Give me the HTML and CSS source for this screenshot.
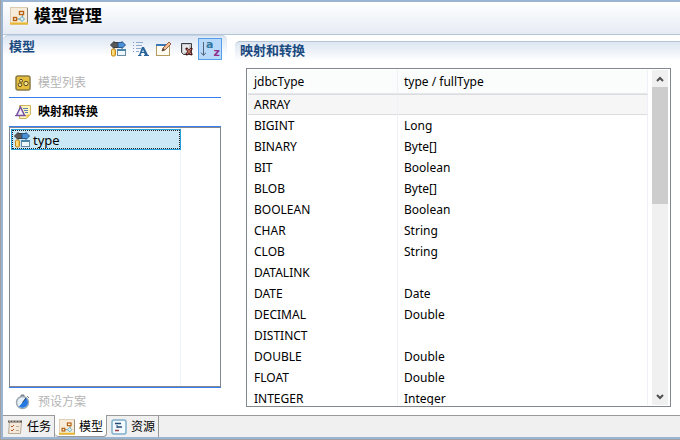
FILE: index.html
```html
<!DOCTYPE html>
<html lang="zh-CN">
<head>
<meta charset="utf-8">
<title>模型管理</title>
<link rel="stylesheet" href="styles.css">
</head>
<body>
<svg class="defs" aria-hidden="true">
  <symbol id="i-model" viewBox="0 0 18 18">
    <rect x="0.5" y="0.5" width="17" height="17" fill="#f7ecd9" stroke="#ddcbb0"/>
    <path d="M17.5 1v16" stroke="#8d8478"/>
    <path d="M0 16.5h18" stroke="#e8b92e" stroke-width="2"/>
    <path d="M7 12h3M12.500 8v2" stroke="#7d8b92"/>
    <rect x="3.500" y="10.500" width="3" height="3" fill="#fff" stroke="#b8620f" stroke-width="1.400"/>
    <rect x="9.500" y="4.500" width="4" height="3" fill="#fff" stroke="#b8620f" stroke-width="1.400"/>
    <path d="M12 9.500l2.500 2.500-2.500 2.500L9.500 12z" fill="#d7f0f5" stroke="#5aa5b8"/>
  </symbol>
  <symbol id="i-type" viewBox="0 0 16 16">
    <path d="M0.500 4L4 0.500v1h4v5H4v1z" fill="#5a5a5a" stroke="#3c3c3c"/>
    <path d="M15.500 4L12 0.500v1H8v5h4v1z" fill="#4b8fd6" stroke="#28598c"/>
    <path d="M1.500 9c0-1.500 4-1.500 4 0v5c0 1.500-4 1.500-4 0z" fill="#f5c64c" stroke="#c4891c"/>
    <path d="M3 9v5" stroke="#fff2b8"/>
    <rect x="7.500" y="8.500" width="8" height="6" fill="#eef7fb" stroke="#688ba0"/>
    <path d="M7 9h9" stroke="#4e86a8" stroke-width="2"/>
  </symbol>
  <symbol id="i-text" viewBox="0 0 16 16">
    <path d="M3 1.500h7M3 4.500h6M3 7.500h5M3 10.500h3" stroke="#93a9cc"/>
    <path d="M0 1.500h1M0 4.500h1M0 7.500h1M0 10.500h1" stroke="#7c98c8"/>
    <path d="M9 6h2l4 8h1v1h-5v-1h1l-1-2H8.500l-1 2h1v1H5v-1h1z" fill="#28649a"/>
    <path d="M9 11h2L10 8.500z" fill="#d8e8f4"/>
  </symbol>
  <symbol id="i-edit" viewBox="0 0 16 16">
    <rect x="0.500" y="3.500" width="13" height="11" fill="#fffdf2" stroke="#b49a5b"/>
    <path d="M0 4h10" stroke="#3978b7" stroke-width="2"/>
    <path d="M6 10l1-3 6-6 2 2-6 6z" fill="#f0bf96" stroke="#9b6245"/>
    <path d="M6 10l1-3 2 2z" fill="#444"/>
  </symbol>
  <symbol id="i-delete" viewBox="0 0 16 16">
    <path d="M2.500 2.500h10v11h-8l-2-2z" fill="#c8cdd0" stroke="#3e3e42"/>
    <path d="M4 4l6 0v5l-6 3z" fill="#e5e7e8"/>
    <path d="M7 7l6 7M13 7l-6 7" stroke="#4a1714" stroke-width="2.500"/>
    <path d="M8 8l4 5M12 8l-4 5" stroke="#e58a7a"/>
  </symbol>
  <symbol id="i-list" viewBox="0 0 16 16">
    <rect x="1" y="1" width="14" height="14" rx="2" fill="#e5bd3d" stroke="#8b7a43" stroke-width="1.500"/>
    <g fill="#f6e38f" stroke="#5b4b1e"><circle cx="6" cy="5.800" r="1.500"/><circle cx="5" cy="9.800" r="1.800"/><circle cx="11" cy="8.500" r="2.200"/></g>
  </symbol>
  <symbol id="i-map" viewBox="0 0 16 16">
    <path d="M4.500 1.500h11v9l-4 4h-7z" fill="#fff5bd" stroke="#cfb45e"/>
    <path d="M11.500 14.500v-4h4z" fill="#efc553"/>
    <path d="M8 4.500h5M9 6.500h4M10 8.500h3" stroke="#5d82b8"/>
    <path d="M1.500 11.500L5.500 3l4 8.500z" fill="#f5effb" stroke="#7650a1" stroke-width="1.500"/>
    <path d="M0 11.500h11" stroke="#7650a1"/>
  </symbol>
  <symbol id="i-clock" viewBox="0 0 16 16">
    <path d="M6 1h3v2H6zM12 2l2 2" fill="#7a8289" stroke="#7a8289"/>
    <circle cx="7.500" cy="8.500" r="6" fill="#e5f0fa" stroke="#9ca7b0" stroke-width="1.500"/>
    <path d="M7.500 8.500L11 4a5.200 5.200 0 0 1-7 8.500z" fill="#2478e2"/>
    <path d="M7.500 8.500L11 4" stroke="#263b52"/>
  </symbol>
  <symbol id="i-task" viewBox="0 0 16 16">
    <path d="M2.500 2.500h12l-1 12h-12z" fill="#f4e9d8" stroke="#b7aa98"/>
    <path d="M1 1.500h14v2H1z" fill="#5d5650"/>
    <path d="M3 1v2M6 1v2M9 1v2M12 1v2" stroke="#ddd5c8"/>
    <path d="M4 7l1 1 2-2M4 11l1 1 2-2" fill="none" stroke="#b5532d"/>
    <path d="M9 7.500h3M9 11.500h3" stroke="#b9b0a2"/>
  </symbol>
  <symbol id="i-resource" viewBox="0 0 16 16">
    <rect x="1" y="1" width="14" height="14" rx="2" fill="#f2faff" stroke="#7eaecb" stroke-width="1.500"/>
    <path d="M4 4.500h6M6 8h5" stroke="#244b79" stroke-width="1.500"/>
    <path d="M6 6v3" stroke="#244b79"/>
    <path d="M4 11.500h4" stroke="#9c3f3a" stroke-width="1.500"/>
  </symbol>
  <symbol id="i-arrow" viewBox="0 0 6 16"><path d="M3.500 1v13M1 11.500L3.500 14.500l2.500-3" fill="none" stroke="#536579"/></symbol>
</svg>
<div class="app">
  <header class="title">
    <svg class="icon-title"><use href="#i-model"/></svg>
    <h1>模型管理</h1>
  </header>
  <main class="body">
    <aside class="side">
      <div class="side-head">
        <h2>模型</h2>
        <div class="tools">
          <button type="button" aria-label="类型"><svg><use href="#i-type"/></svg></button>
          <button type="button" aria-label="文本"><svg><use href="#i-text"/></svg></button>
          <button type="button" aria-label="编辑"><svg><use href="#i-edit"/></svg></button>
          <button type="button" aria-label="删除"><svg><use href="#i-delete"/></svg></button>
          <button type="button" class="on" aria-label="排序"><svg class="arrow"><use href="#i-arrow"/></svg><span class="az"><b>a</b><b>z</b></span></button>
        </div>
      </div>
      <button type="button" class="fold muted first"><svg><use href="#i-list"/></svg>模型列表</button>
      <button type="button" class="fold current"><svg><use href="#i-map"/></svg>映射和转换</button>
      <div class="list">
        <div class="list-col"><button type="button" class="item"><svg><use href="#i-type"/></svg>type</button></div>
      </div>
      <button type="button" class="fold muted last"><svg><use href="#i-clock"/></svg>预设方案</button>
    </aside>
    <section class="detail">
      <h2 class="detail-head">映射和转换</h2>
      <div class="grid-box">
        <div class="grid-view">
          <table>
            <thead><tr><th>jdbcType</th><th>type / fullType</th></tr></thead>
            <tbody>
              <tr class="hot"><td>ARRAY</td><td></td></tr>
              <tr><td>BIGINT</td><td>Long</td></tr>
              <tr><td>BINARY</td><td>Byte[]</td></tr>
              <tr><td>BIT</td><td>Boolean</td></tr>
              <tr><td>BLOB</td><td>Byte[]</td></tr>
              <tr><td>BOOLEAN</td><td>Boolean</td></tr>
              <tr><td>CHAR</td><td>String</td></tr>
              <tr><td>CLOB</td><td>String</td></tr>
              <tr><td>DATALINK</td><td></td></tr>
              <tr><td>DATE</td><td>Date</td></tr>
              <tr><td>DECIMAL</td><td>Double</td></tr>
              <tr><td>DISTINCT</td><td></td></tr>
              <tr><td>DOUBLE</td><td>Double</td></tr>
              <tr><td>FLOAT</td><td>Double</td></tr>
              <tr><td>INTEGER</td><td>Integer</td></tr>
            </tbody>
          </table>
        </div>
        <div class="scroll">
          <button type="button" aria-label="向上"><svg viewBox="0 0 8 6"><path d="M1 5l3-3 3 3" /></svg></button>
          <div class="track"><div class="thumb"></div></div>
          <button type="button" aria-label="向下"><svg viewBox="0 0 8 6"><path d="M1 1l3 3 3-3" /></svg></button>
        </div>
      </div>
    </section>
  </main>
  <nav class="tabs">
    <button type="button"><svg><use href="#i-task"/></svg>任务</button>
    <button type="button" class="active"><svg><use href="#i-model"/></svg>模型</button>
    <button type="button"><svg><use href="#i-resource"/></svg>资源</button>
  </nav>
</div>
</body>
</html>
```
FILE: styles.css
```css
* { box-sizing: border-box; }
html, body { height: 100%; margin: 0; }
body {
  font: 12px/20px "Noto Sans", "Noto Sans CJK SC", sans-serif;
  color: #000;
  background: #fff;
  border: solid #a0a0a0;
  border-width: 0 0 1px 1px;
}
button { font: inherit; color: inherit; background: none; border: 0; padding: 0; margin: 0; }
h1, h2 { margin: 0; }
svg { flex: none; width: 16px; height: 16px; display: block; }
.defs { position: absolute; width: 0; height: 0; }

.app {
  height: 100%;
  display: flex;
  flex-direction: column;
  border: 2px solid #9ab4d1;
  border-right: 0;
}
.title {
  height: 33px;
  flex: none;
  display: flex;
  align-items: center;
  gap: 6px;
  padding: 0 7px 4px;
  background: linear-gradient(#fff, #e6ebf4);
  border-bottom: 1px solid #b4c5d8;
}
.title h1 { font-size: 17px; line-height: 24px; font-weight: 700; }
.icon-title { width: 18px; height: 18px; }

.body { flex: 1; min-height: 0; display: flex; gap: 8px; }
.side { width: 224px; flex: none; display: flex; flex-direction: column; padding-bottom: 2px; }
.side-head {
  height: 30px;
  display: flex;
  justify-content: space-between;
  padding: 2px 5px 0 6px;
  background: linear-gradient(#dce6f3, #fff 20px);
  border-top: 1px solid #c5d5e6;
  border-radius: 5px 5px 0 0;
}
h2 { color: #1a4a80; font-size: 13px; line-height: 18px; font-weight: 700; }
.side-head h2 { line-height: 16px; }
.tools { display: flex; }
.tools button { width: 23px; height: 22px; display: flex; align-items: center; justify-content: center; }
.tools .on { width: 24px; background: #b9d9fb; border: 1px solid #559fe8; }
.tools .arrow { width: 6px; }
.az { display: flex; font: 11px/11px "DejaVu Sans", sans-serif; height: 20px; }
.az b:first-child { color: #32779b; }
.az b:last-child { color: #8e2f8e; padding-top: 8px; }

.fold {
  flex: none;
  height: 29px;
  margin: 0 6px;
  padding: 0 6px;
  display: flex;
  align-items: center;
  gap: 7px;
  border-bottom: 1px solid #3a7ff0;
}
.muted { color: #b4b4b4; }
.first { height: 33px; padding-top: 3px; }
.current { font-weight: 700; border-bottom: 1px solid #3a7ff0; }
.last { border: 0; height: 26px; padding-top: 4px; }
.list {
  flex: 1;
  min-height: 0;
  margin: 0 6px;
  padding: 0 1px;
  border: 1px solid #828790;
  box-shadow: 0 1px #3a7ff0;
}
.list-col { width: 170px; height: 100%; border-right: 1px solid #ecf3fa; padding-top: 1px; }
.item {
  width: 170px;
  height: 21px;
  display: flex;
  align-items: center;
  gap: 3px;
  padding-left: 2px;
  background: #cbe8f6;
  border: 1px solid #26a0da;
  outline: 1px dotted #222;
  outline-offset: -2px;
  font-size: 13px;
}

.detail { flex: 1; min-width: 0; display: flex; flex-direction: column; padding: 6px 0 8px; }
.detail-head {
  height: 20px;
  flex: none;
  padding-left: 5px;
  line-height: 16px;
  background: linear-gradient(#dce5f1, #fff);
  border-top: 1px solid #b4c5d8;
  border-radius: 5px 0 0 0;
}
.grid-box {
  flex: 1;
  min-height: 0;
  margin: 7px 9px 0 11px;
  padding: 1px;
  display: flex;
  border: 1px solid #828790;
}
.grid-view { flex: 1; min-width: 0; overflow: hidden; padding-right: 4px; }
table { width: 100%; table-layout: fixed; border-collapse: separate; border-spacing: 0; }
th, td { height: 21px; padding: 0 6px; text-align: left; font-weight: 400; line-height: 20px; border-right: 1px solid #eef1f5; }
th { height: 24px; background: #fbfdfd; border-bottom: 1px solid #e4e8ee; }
th:first-child { width: 150px; }
.hot td { background: #f6f6f6; border-bottom: 1px solid #dcdcdc; border-top: 1px solid #dcdcdc; line-height: 18px; }
.scroll { width: 16px; flex: none; margin-right: 1px; display: flex; flex-direction: column; background: #f0f0f0; }
.scroll button { height: 17px; display: flex; align-items: center; justify-content: center; }
.scroll svg { width: 8px; height: 6px; fill: none; stroke: #505050; stroke-width: 2; }
.track { flex: 1; }
.thumb { height: 39%; background: #cdcdcd; }

.tabs { height: 22px; flex: none; display: flex; background: #f0f0f0; border-top: 1px solid #9a9a9a; }
.tabs button { display: flex; align-items: center; gap: 4px; padding: 0 3px 0 4px; border-right: 1px solid #9a9a9a; }
.tabs .active { background: #fff; margin-top: -1px; padding-top: 2px; border-bottom: 1px solid #9a9a9a; border-radius: 0 0 4px 4px; }
```
